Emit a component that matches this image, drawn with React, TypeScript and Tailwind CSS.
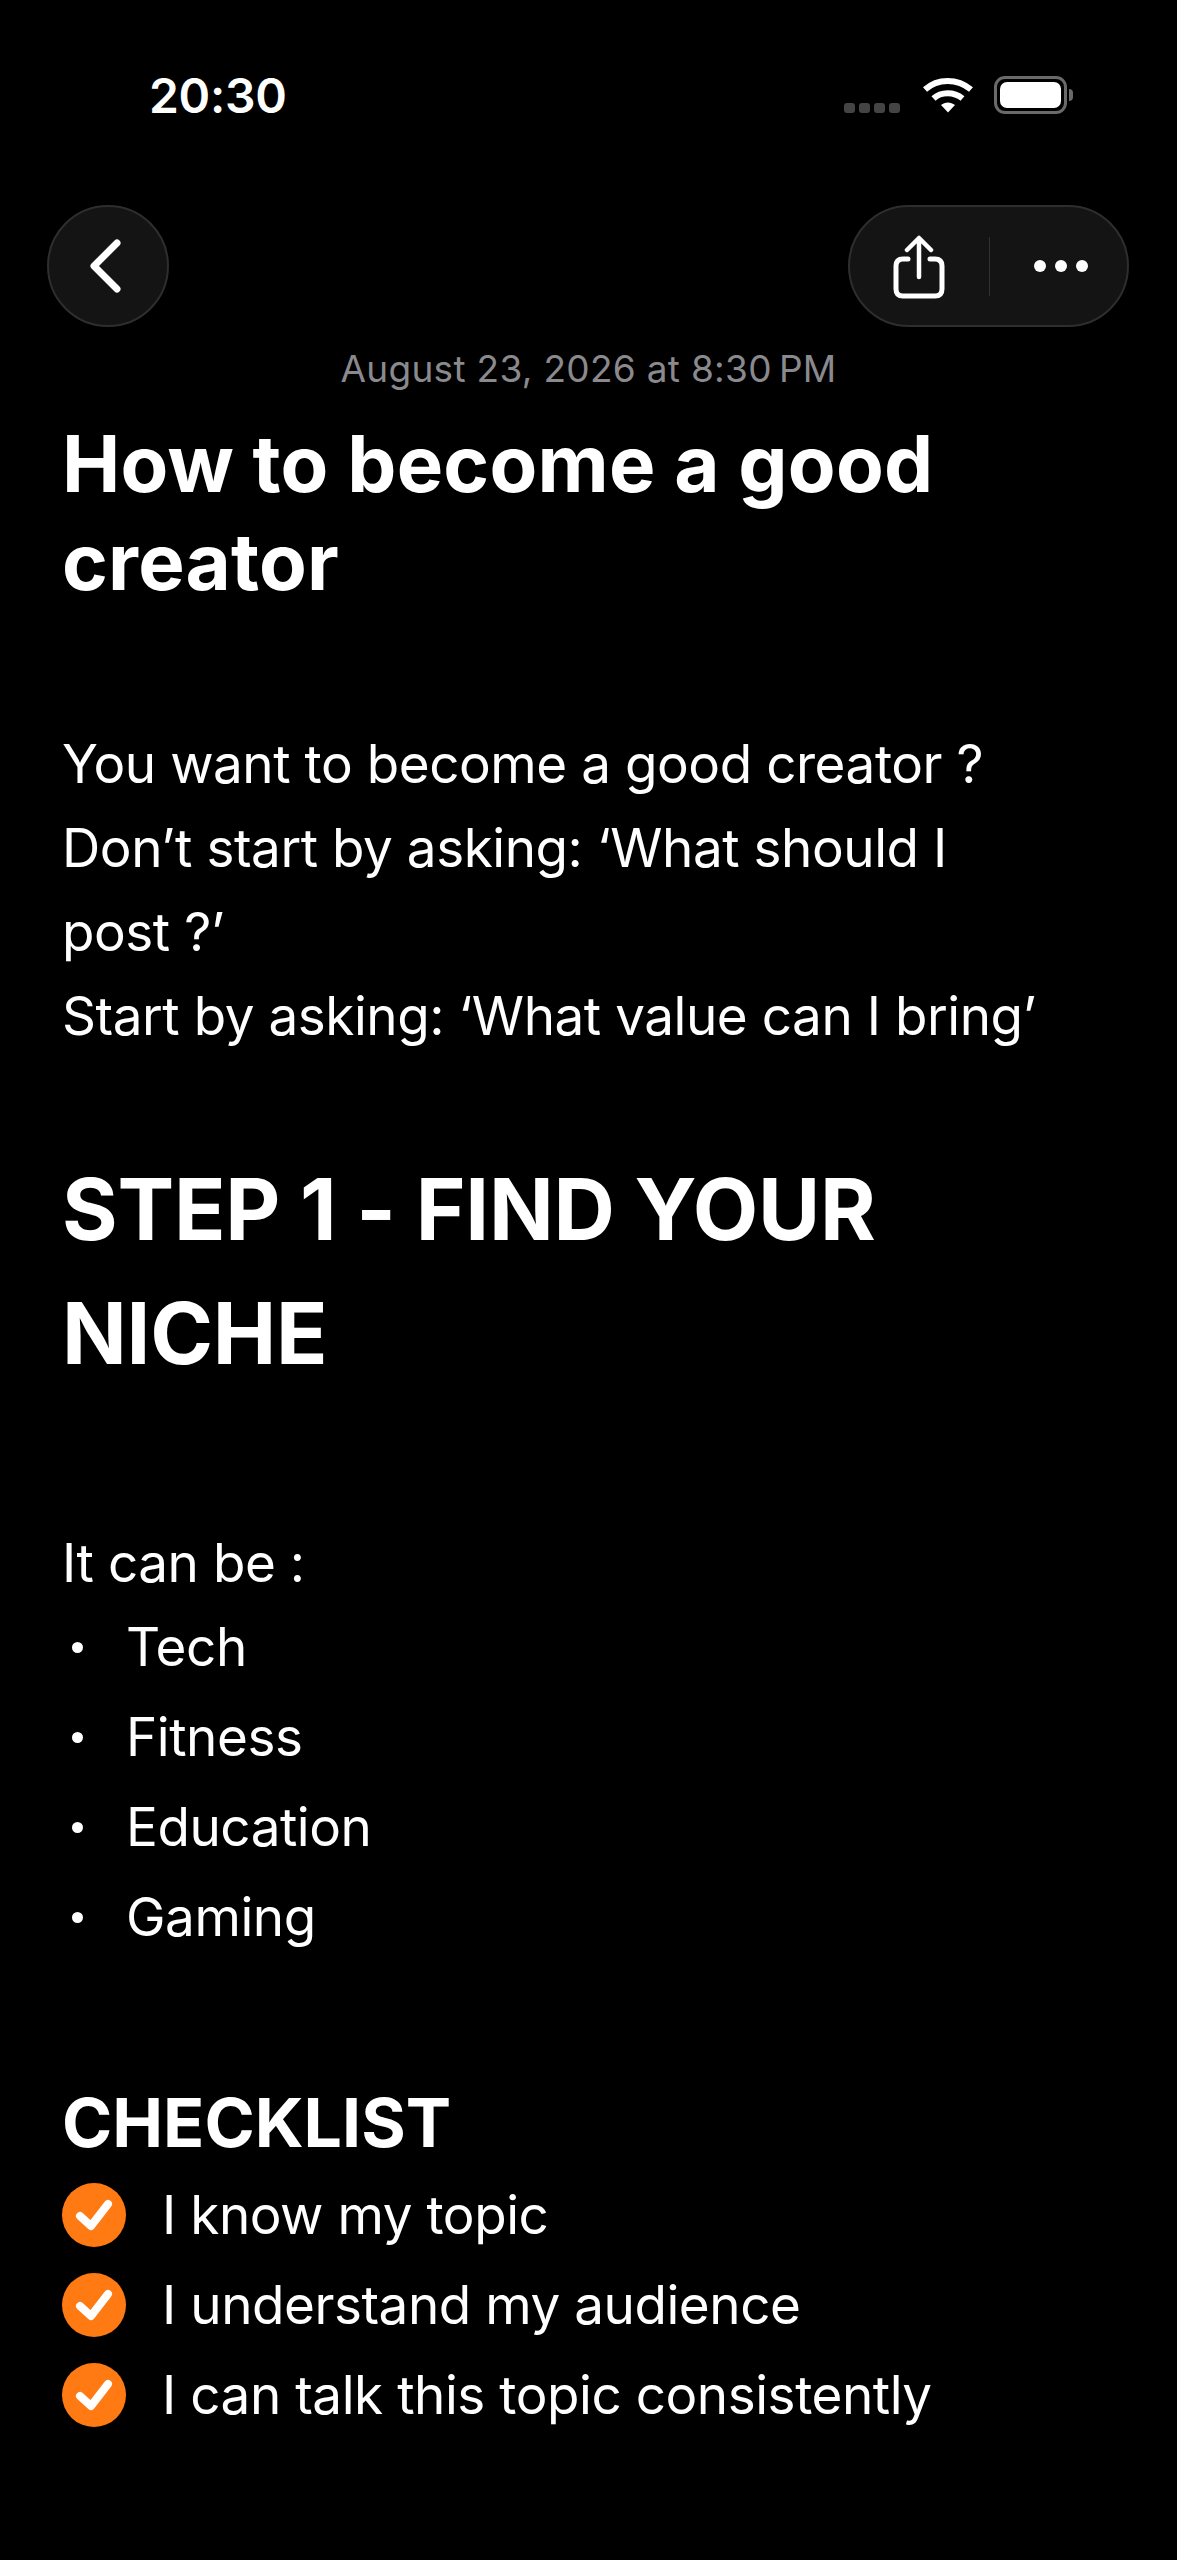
const BULLETS = ['Tech', 'Fitness', 'Education', 'Gaming'] as const;

const CHECKS = ['I know my topic', 'I understand my audience', 'I can talk this topic consistently'] as const;

function StatusBar() {
  return (
    <div className="flex h-[192px] items-start justify-between pt-[70px] pl-[149px] pr-[104px]">
      <span className="text-[48px] leading-[52px] font-semibold tracking-[-0.3px]">20:30</span>
      <div className="flex items-start pt-[6px]">
        <div className="mt-[27px] mr-[23px] flex gap-[4px]">
          <span className="h-[10px] w-[11px] rounded-[3px] bg-[#444444]" />
          <span className="h-[10px] w-[11px] rounded-[3px] bg-[#444444]" />
          <span className="h-[10px] w-[11px] rounded-[3px] bg-[#444444]" />
          <span className="h-[10px] w-[11px] rounded-[3px] bg-[#444444]" />
        </div>
        <svg width="50" height="38" viewBox="0 0 50 38" className="mr-[21px]">
          <path d="M2 13.5C14.5 2 34.500 2 48 13.500" fill="none" stroke="white" strokeWidth="6" />
          <path d="M10.500 22.500C18 15.500 31 15.500 39.500 22.500" fill="none" stroke="white" strokeWidth="6" />
          <path d="M18 29C22 25.500 27.500 25.500 32 29L25 36.500Z" fill="white" />
        </svg>
        <div className="flex items-center">
          <div className="h-[38px] w-[73px] rounded-[11px] border-[3px] border-[#6a6a6a] p-[3px]">
            <div className="h-full w-full rounded-[7px] bg-white" />
          </div>
          <span className="ml-[2px] h-[12px] w-[4px] rounded-r-full bg-[#6a6a6a]" />
        </div>
      </div>
    </div>
  );
}

function NavBar() {
  return (
    <div className="flex items-center justify-between pl-[47px] pr-[48px]">
      <button className="flex h-[122px] w-[122px] items-center justify-center rounded-full border-2 border-[#2e2e2e] bg-[#141414]">
        <svg width="36" height="56" viewBox="0 0 36 56" className="mr-[5px]">
          <path d="M29 5L6 28L29 51" fill="none" stroke="white" strokeWidth="7" strokeLinecap="round" strokeLinejoin="round" />
        </svg>
      </button>
      <div className="flex h-[122px] w-[281px] items-center rounded-full border-2 border-[#2e2e2e] bg-[#141414]">
        <div className="flex w-[139px] justify-center">
          <svg width="52" height="64" viewBox="0 0 52 64" className="mt-[2px] ml-[-2px]">
            <path d="M15 24H10Q3 24 3 31V54Q3 61 10 61H42Q49 61 49 54V31Q49 24 42 24H37" fill="none" stroke="white" strokeWidth="5" strokeLinecap="round" />
            <path d="M26 42V4M14 15L26 3L38 15" fill="none" stroke="white" strokeWidth="4.500" strokeLinecap="round" strokeLinejoin="round" />
          </svg>
        </div>
        <div className="h-[59px] w-px bg-[#303030]" />
        <div className="flex flex-1 justify-center gap-[9px] pl-[4px]">
          <span className="h-[12px] w-[12px] rounded-full bg-white" />
          <span className="h-[12px] w-[12px] rounded-full bg-white" />
          <span className="h-[12px] w-[12px] rounded-full bg-white" />
        </div>
      </div>
    </div>
  );
}

export default function App() {
  return (
    <div className="h-[2560px] overflow-hidden bg-black text-white [font-family:Inter,sans-serif]">
      <StatusBar />
      <div className="mt-[13px]">
        <NavBar />
      </div>

      <p className="mt-[20px] text-center text-[37px] leading-[44px] tracking-[0.3px] text-[#8a8a8e]">
        August 23, 2026 at 8:30{'\u202f'}PM
      </p>

      <div className="px-[62px]">
        <h1 className="mt-[24px] text-[78px] leading-[98px] font-bold tracking-[0.2px]">How to become a good creator</h1>

        <div className="mt-[111px] max-w-[990px] text-[53px] leading-[84px] tracking-[-0.45px]">
          <p>You want to become a good creator ?</p>
          <p>Don’t start by asking: ‘What should I post ?’</p>
          <p>Start by asking: ‘What value can I bring’</p>
        </div>

        <h2 className="mt-[90px] text-[85px] leading-[124px] font-bold tracking-[-0.25px]">STEP 1 - FIND YOUR NICHE</h2>

        <p className="mt-[125px] text-[53px] leading-[84px] tracking-[-0.45px]">It can be :</p>
        <ul className="flex flex-col gap-[6px]">
          {BULLETS.map((item) => (
            <li key={item} className="flex items-center text-[53px] leading-[84px] tracking-[-0.45px]">
              <span className="ml-[10px] h-[11px] w-[11px] rounded-full bg-white" />
              <span className="ml-[43px]">{item}</span>
            </li>
          ))}
        </ul>

        <h3 className="mt-[121px] text-[68px] leading-[84px] font-bold">CHECKLIST</h3>
        <ul className="mt-[9px] flex flex-col gap-[6px]">
          {CHECKS.map((item) => (
            <li key={item} className="flex h-[84px] items-center text-[53px] leading-[84px] tracking-[-0.45px]">
              <svg width="64" height="64" viewBox="0 0 64 64" className="shrink-0">
                <circle cx="32" cy="32" r="32" fill="#ff7a12" />
                <path d="M18 33L29 43L46 21" fill="none" stroke="white" strokeWidth="8" strokeLinecap="round" strokeLinejoin="round" />
              </svg>
              <span className="ml-[36px]">{item}</span>
            </li>
          ))}
        </ul>
      </div>
    </div>
  );
}
